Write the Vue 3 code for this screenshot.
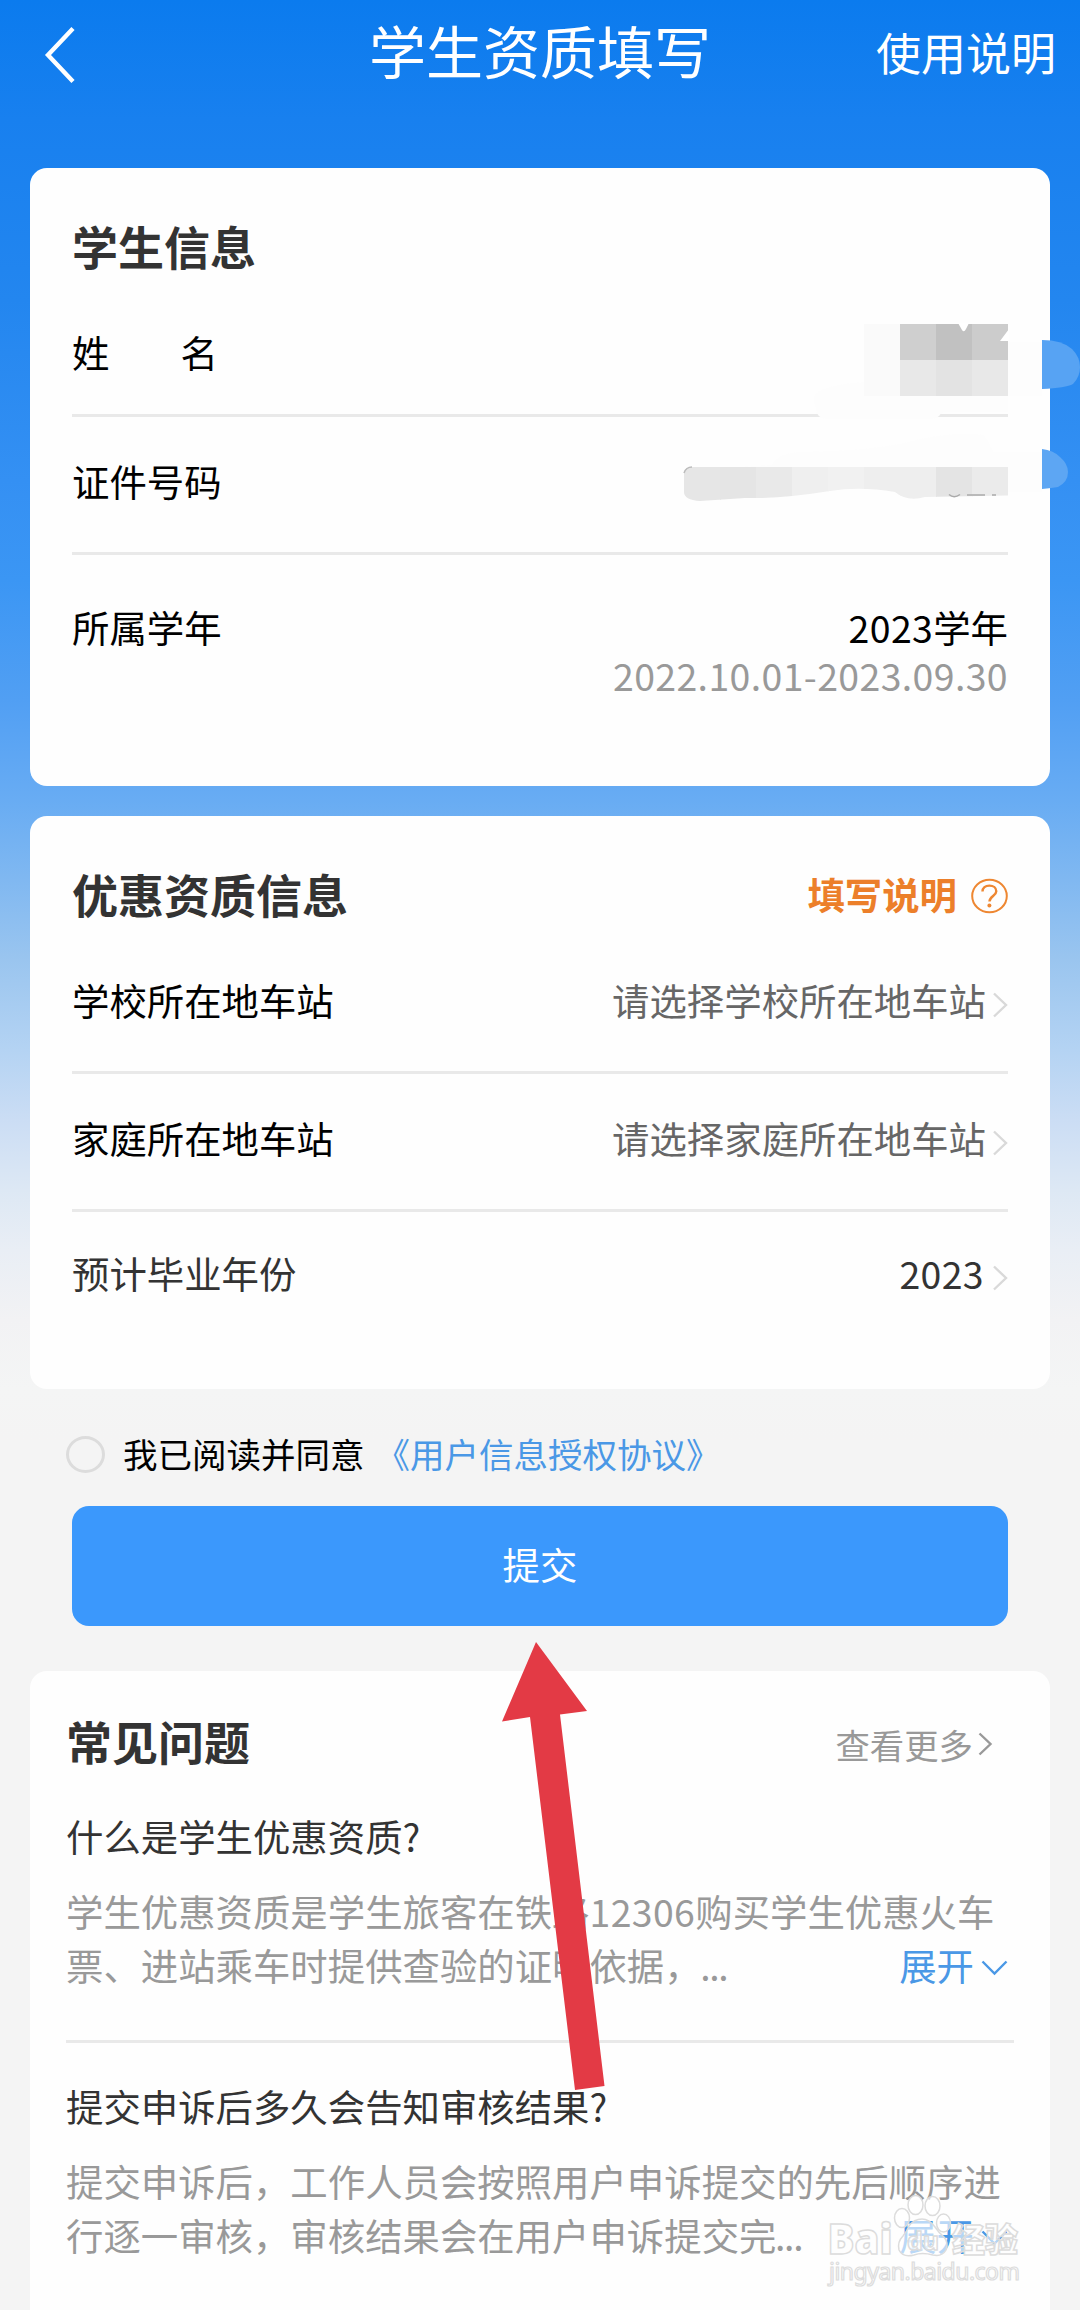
<script setup>
const faqs = [
  {
    q: '什么是学生优惠资质?',
    first: ['学生优惠资质是学生旅客在铁路', '12306', '购买学生优惠火车'],
    second: '票、进站乘车时提供查验的证明依据，'
  },
  {
    q: '提交申诉后多久会告知审核结果?',
    first: ['提交申诉后，工作人员会按照用户申诉提交的先后顺序进', '', ''],
    second: '行逐一审核，审核结果会在用户申诉提交完'
  }
]
const stations = [
  { label: '学校所在地车站', value: '请选择学校所在地车站' },
  { label: '家庭所在地车站', value: '请选择家庭所在地车站' }
]
const idTiles = ['#e6e6e6', '#e5e5e5', '#e9e9e9', '#efefef', '#f1f1f1', '#eeeeee', '#eeeeee', '#e4e4e4', '#ebebeb']
</script>

<template>
  <div class="page" lang="zh-CN">
    <header class="header">
      <svg class="back" width="32" height="58" viewBox="0 0 32 58"><path d="M29 2.5 4 29 29 55.5" fill="none" stroke="#fff" stroke-width="4.4" /></svg>
      <h1>学生资质填写</h1>
      <span class="help">使用说明</span>
    </header>

    <section class="card info">
      <h2>学生信息</h2>
      <div class="row name"><span class="spread"><i>姓</i><i>名</i></span></div>
      <div class="row id"><span>证件号码</span></div>
      <div class="row year">
        <span>所属学年</span>
        <div class="term">
          <div><span class="num">2023</span>学年</div>
          <div class="range num">2022.10.01-2023.09.30</div>
        </div>
      </div>
    </section>

    <section class="card quali">
      <div class="head">
        <h2>优惠资质信息</h2>
        <div class="guide">
          <span>填写说明</span>
          <svg width="37" height="36" viewBox="0 0 37 36">
            <g fill="none" stroke="#ee8732" stroke-width="2">
              <ellipse cx="18.5" cy="18" rx="17.3" ry="16.3" />
              <path d="M11.5 13.5C11.5 9.7 14.4 7.6 18.4 7.6s6.9 2.2 6.9 5.6c0 4.6-6.8 5-6.8 10.3" stroke-width="2.4" />
            </g>
            <circle cx="18.4" cy="27.6" r="2" fill="#ee8732" />
          </svg>
        </div>
      </div>
      <div v-for="s in stations" :key="s.label" class="row station">
        <span>{{ s.label }}</span>
        <div class="pick">
          <span>{{ s.value }}</span>
          <svg width="15" height="26" viewBox="0 0 15 26"><path d="M1 1.5 13 13 1 24.5" fill="none" stroke="#d9d9d9" stroke-width="2.4" /></svg>
        </div>
      </div>
      <div class="row grad">
        <span>预计毕业年份</span>
        <div class="pick dark">
          <span class="num">2023</span>
          <svg width="15" height="26" viewBox="0 0 15 26"><path d="M1 1.5 13 13 1 24.5" fill="none" stroke="#d9d9d9" stroke-width="2.4" /></svg>
        </div>
      </div>
    </section>

    <div class="agree">
      <span class="radio"></span>
      <span>我已阅读并同意</span>
      <span class="link">《用户信息授权协议》</span>
    </div>
    <button class="submit">提交</button>

    <section class="card faq">
      <div class="head">
        <h2>常见问题</h2>
        <div class="more">
          <span>查看更多</span>
          <svg width="15" height="24" viewBox="0 0 15 24"><path d="M1.5 1.5 12.5 12 1.5 22.5" fill="none" stroke="#999" stroke-width="2.4" /></svg>
        </div>
      </div>
      <article v-for="f in faqs" :key="f.q">
        <h3>{{ f.q }}</h3>
        <p>{{ f.first[0] }}<span class="num">{{ f.first[1] }}</span>{{ f.first[2] }}</p>
        <div class="last">
          <p>{{ f.second }}<span class="dots">...</span></p>
          <div class="expand">
            <span>展开</span>
            <svg width="27" height="16" viewBox="0 0 27 16"><path d="M1.5 1.5 13.5 13.5 25.5 1.5" fill="none" stroke="#4a98e6" stroke-width="2.4" /></svg>
          </div>
        </div>
      </article>
    </section>

    <svg class="overlay" width="1080" height="2310" viewBox="0 0 1080 2310">
      <defs>
        <clipPath id="strip">
          <path d="M684 474Q684 467 692 467H1008V495.500L925 497Q907 502 895 492Q860 486 830 491Q780 499 745 498L700 501Q684 500 684 492Z" />
        </clipPath>
      </defs>
      <!-- masked name -->
      <path d="M864 324H1008V396H1042V342H1008V412H950L826 418Q812 410 814 396Q820 385 864 382Z" fill="#fdfdfd" />
      <rect x="864" y="324" width="36" height="72" fill="#fafafa" />
      <rect x="816" y="396" width="126" height="23" rx="10" fill="#fdfdfd" />
      <path d="M940 416.200H1008" stroke="#e9e9e9" stroke-width="1.500" />
      <rect x="900" y="324" width="36" height="38.500" fill="#cfcfcf" />
      <rect x="936" y="324" width="36" height="38.500" fill="#c1c1c1" />
      <rect x="972" y="324" width="36" height="38.500" fill="#cccccc" />
      <rect x="900" y="360" width="108" height="36" fill="#e8e8e8" />
      <rect x="936" y="360" width="36" height="36" fill="#e3e3e3" />
      <path d="M958 323 962 330Q964 333 966 329L969 323ZM1009 329 1000 341H1009Z" fill="#fff" />
      <path d="M1042 340Q1062 340 1072 349Q1080 357 1080 367Q1080 377 1073 384Q1066 388 1042 389Z" fill="#57a3f3" />
      <!-- masked id number -->
      <path d="M772 465Q778 453 800 452Q880 451 920 439Q960 431 984 435Q990 443 993 452H1042V492H1008V467H740Z" fill="#fdfdfd" />
      <g clip-path="url(#strip)">
        <rect v-for="(c, i) in idTiles" :key="i" :x="684 + i * 36" y="467" width="37" height="36" :fill="c" />
      </g>
      <path d="M684 473Q686 467 692 467" fill="none" stroke="#bbb" stroke-width="1.500" />
      <path d="M949 494.500Q954 499 960 494.500M967 495H985M992 495H996" fill="none" stroke="#aaa" stroke-width="1.500" />
      <path d="M1042 449Q1053 450 1060 457Q1068 464 1068 472Q1068 482 1058 487Q1052 488 1042 489Z" fill="#5da6f3" />
      <!-- pointer arrow -->
      <path d="M536 1642 587 1711 560 1714.500 604.500 2086 575 2090 530 1717 502 1721.500Z" fill="#e33a45" />
      <!-- watermark -->
      <g class="mark">
        <text x="827.500" y="2254" font-size="43" font-weight="900" textLength="65" lengthAdjust="spacingAndGlyphs" class="latin">Bai</text>
        <ellipse cx="902" cy="2218" rx="7.500" ry="9.500" />
        <ellipse cx="915.500" cy="2205" rx="7.500" ry="9.500" />
        <ellipse cx="932.500" cy="2206" rx="7.500" ry="9.500" />
        <ellipse cx="943.500" cy="2223" rx="7" ry="9" />
        <path d="M909 2226Q914 2219 922 2219Q929 2219 935 2227Q939 2233 944 2237Q949 2243 946 2250Q942 2257 933 2255Q922 2252 914 2255Q903 2258 899 2250Q897 2242 903 2236Q907 2231 909 2226Z" />
        <text x="907" y="2250" font-size="25" font-weight="700" textLength="32" class="latin">du</text>
        <text x="952" y="2252" font-size="33" font-weight="900">经验</text>
        <text x="829" y="2280" font-size="23" textLength="191" class="latin url">jingyan.baidu.com</text>
      </g>
    </svg>
  </div>
</template>

<style>
body { margin: 0; }
</style>

<style scoped>
.page {
  position: relative;
  width: 1080px;
  height: 2310px;
  overflow: hidden;
  font-family: "Noto Sans CJK SC", sans-serif;
  font-size: 37.4px;
  line-height: 54px;
  color: #000;
  background: linear-gradient(180deg, #0b7bee 0, #1880ef 120px, #2386ef 300px, #3490f3 480px, #3b96f4 580px, #519ff3 700px, #68acf3 800px, #80b8f1 880px, #9ac5ef 960px, #b4d3f3 1050px, #cbddf4 1120px, #dde8f4 1190px, #e9eef5 1250px, #f2f2f4 1320px, #f4f5f5 1390px, #f4f4f4 1440px);
}
h1, h2, h3, p { margin: 0; font-weight: 400; white-space: nowrap; }
i { font-style: normal; }
svg { display: block; flex: none; }
.header {
  height: 168px;
  box-sizing: border-box;
  padding: 20px 24px 0 44px;
  display: grid;
  grid-template-columns: 200px 1fr 180px;
  align-items: start;
  color: #fff;
}
.back { margin-top: 6px; }
h1 { font-size: 57px; line-height: 58px; padding-left: 125px; }
.help { font-size: 45px; line-height: 60px; margin: 2px 0 0 0; white-space: nowrap; justify-self: end; }
.card { width: 1020px; box-sizing: border-box; margin: 0 30px; background: #fefefe; border-radius: 17px; padding: 0 42px; }
h2 { font-size: 46px; line-height: 60px; font-weight: 700; color: #333; }
.info { height: 618px; padding-top: 48px; }
.info h2, .quali h2 { margin-top: -1px; margin-bottom: 1px; }
.row { display: flex; justify-content: space-between; align-items: flex-start; box-sizing: border-box; white-space: nowrap; }
.name { height: 141px; padding-top: 49px; border-bottom: 3px solid #e9e9e9; }
.spread { display: flex; justify-content: space-between; width: 146px; }
.id { height: 138px; padding-top: 37px; border-bottom: 3px solid #e9e9e9; }
.year { padding-top: 45px; }
.term { text-align: right; }
.range { line-height: 43px; color: #999; }
.num { letter-spacing: .4px; }
.quali { height: 573px; margin-top: 30px; padding-top: 48px; }
.head { display: flex; justify-content: space-between; align-items: center; }
.guide { display: flex; gap: 14px; align-items: center; color: #ec7f2a; font-weight: 700; }
.guide svg { margin-top: 3px; }
.station { height: 138px; padding-top: 37px; border-bottom: 3px solid #e9e9e9; }
.head + .station { height: 150px; padding-top: 49px; }
.pick { display: flex; align-items: center; gap: 7px; color: #666; }
.pick svg { margin-top: 10px; }
.grad { padding-top: 34px; color: #333; }
.pick.dark { color: #333; gap: 9px; }
.agree { display: flex; align-items: center; height: 54px; margin: 37px 0 26px 66px; font-size: 34.500px; white-space: nowrap; }
.radio { width: 39px; height: 37px; box-sizing: border-box; border: 3px solid #dcdcdc; border-radius: 50%; margin: 3px 18px 0 0; }
.link { color: #4a98e6; margin-left: 11px; }
.submit { display: block; width: 936px; height: 120px; margin: 0 72px; padding: 0 0 4px; border: 0; border-radius: 17px; background: #3b98fc; color: #fff; font: inherit; }
.faq { height: 660px; margin-top: 45px; padding: 38px 36px 0; }
.more { display: flex; align-items: center; gap: 5px; margin: 8px 21px 0 0; font-size: 34.400px; color: #999; }
.more svg { margin-top: -1px; }
h3 { font-size: 37.400px; line-height: 54px; color: #333; margin-bottom: 21px; }
article { padding: 39px 0 48px; color: #999; }
.head + article { padding-top: 38px; }
article + article { border-top: 3px solid #e9e9e9; padding-top: 36px; }
.last { display: flex; justify-content: space-between; padding-right: 6px; }
.dots { letter-spacing: -1.300px; margin-left: -1.500px; }
.expand { display: flex; align-items: center; gap: 7px; color: #4a98e6; }
.expand svg { margin-top: 6px; }
.overlay { position: absolute; left: 0; top: 0; }
.mark { fill: rgba(255, 255, 255, .62); stroke: #dcdcdc; stroke-width: 1.500px; }
.latin { font-family: "Noto Sans", sans-serif; }
.url { stroke-width: 1.200px; }
</style>
